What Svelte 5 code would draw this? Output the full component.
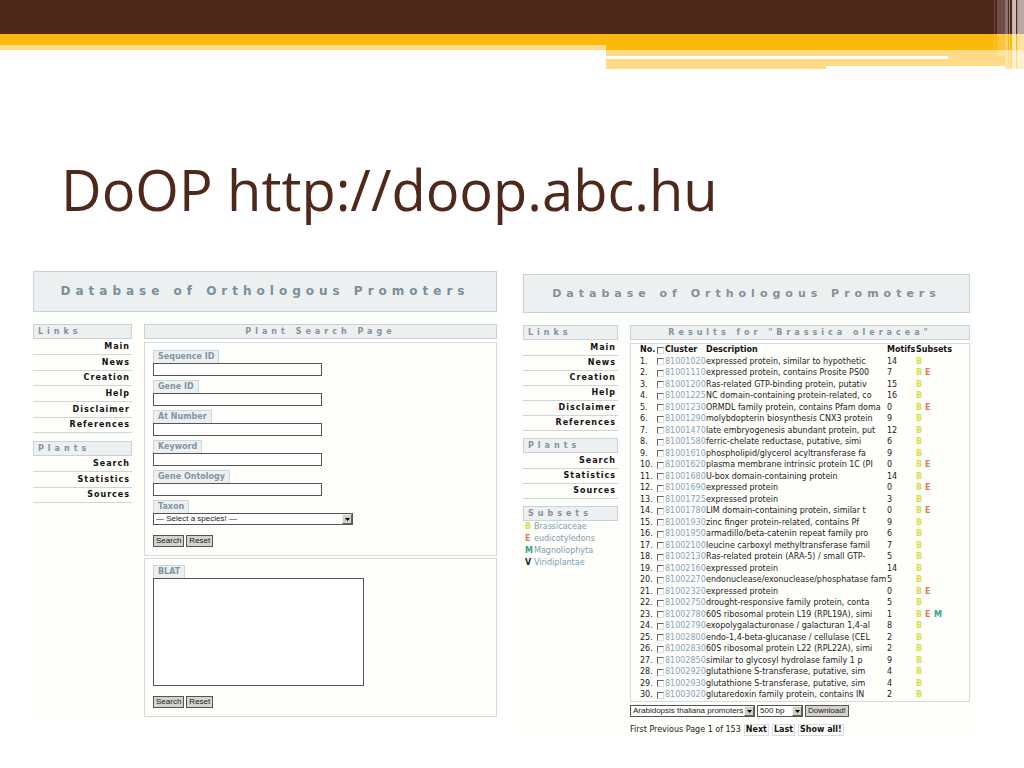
<script>
  const links = ['Main', 'News', 'Creation', 'Help', 'Disclaimer', 'References'];
  const plants = ['Search', 'Statistics', 'Sources'];
  const fields = ['Sequence ID', 'Gene ID', 'At Number', 'Keyword', 'Gene Ontology'];

  const subsets = [
    { code: 'B', name: 'Brassicaceae' },
    { code: 'E', name: 'eudicotyledons' },
    { code: 'M', name: 'Magnoliophyta' },
    { code: 'V', name: 'Viridiplantae' },
  ];

  // cluster, description, motifs, subsets
  const results = [
    ['81001020', 'expressed protein, similar to hypothetic', 14, 'B'],
    ['81001110', 'expressed protein, contains Prosite PS00', 7, 'BE'],
    ['81001200', 'Ras-related GTP-binding protein, putativ', 15, 'B'],
    ['81001225', 'NC domain-containing protein-related, co', 16, 'B'],
    ['81001230', 'ORMDL family protein, contains Pfam doma', 0, 'BE'],
    ['81001290', 'molybdopterin biosynthesis CNX3 protein', 9, 'B'],
    ['81001470', 'late embryogenesis abundant protein, put', 12, 'B'],
    ['81001580', 'ferric-chelate reductase, putative, simi', 6, 'B'],
    ['81001610', 'phospholipid/glycerol acyltransferase fa', 9, 'B'],
    ['81001620', 'plasma membrane intrinsic protein 1C (PI', 0, 'BE'],
    ['81001680', 'U-box domain-containing protein', 14, 'B'],
    ['81001690', 'expressed protein', 0, 'BE'],
    ['81001725', 'expressed protein', 3, 'B'],
    ['81001780', 'LIM domain-containing protein, similar t', 0, 'BE'],
    ['81001930', 'zinc finger protein-related, contains Pf', 9, 'B'],
    ['81001950', 'armadillo/beta-catenin repeat family pro', 6, 'B'],
    ['81002100', 'leucine carboxyl methyltransferase famil', 7, 'B'],
    ['81002130', 'Ras-related protein (ARA-5) / small GTP-', 5, 'B'],
    ['81002160', 'expressed protein', 14, 'B'],
    ['81002270', 'endonuclease/exonuclease/phosphatase fam', 5, 'B'],
    ['81002320', 'expressed protein', 0, 'BE'],
    ['81002750', 'drought-responsive family protein, conta', 5, 'B'],
    ['81002780', '60S ribosomal protein L19 (RPL19A), simi', 1, 'BEM'],
    ['81002790', 'exopolygalacturonase / galacturan 1,4-al', 8, 'B'],
    ['81002800', 'endo-1,4-beta-glucanase / cellulase (CEL', 2, 'B'],
    ['81002830', '60S ribosomal protein L22 (RPL22A), simi', 2, 'B'],
    ['81002850', 'similar to glycosyl hydrolase family 1 p', 9, 'B'],
    ['81002920', 'glutathione S-transferase, putative, sim', 4, 'B'],
    ['81002930', 'glutathione S-transferase, putative, sim', 4, 'B'],
    ['81003020', 'glutaredoxin family protein, contains IN', 2, 'B'],
  ];

  const slug = (text) => text.toLowerCase().replace(/ /g, '-');
</script>

{#snippet menu(title, items)}
  <h3 class="bar">{title}</h3>
  <ul class="menu">
    {#each items as item}
      <li><a href="#{slug(item)}">{item}</a></li>
    {/each}
  </ul>
{/snippet}

{#snippet arrow()}
  <span class="arrow">
    <svg viewBox="0 0 5 3" width="5" height="3"><path d="M0 0h5L2.5 3z" /></svg>
  </span>
{/snippet}

<svg class="band" viewBox="0 0 1024 70" preserveAspectRatio="none" aria-hidden="true">
  <rect width="1024" height="34" fill="#4f281c" />
  <rect y="34" width="1024" height="11" fill="#fdb90b" />
  <rect y="45" width="606" height="5" fill="#ffdc8a" />
  <rect x="606" y="45" width="418" height="5" fill="#fdb90b" />
  <rect x="606" y="50" width="418" height="6" fill="#ffdb88" />
  <rect x="948" y="56" width="76" height="3" fill="#ffdb88" />
  <rect x="606" y="59" width="418" height="7" fill="#ffdb88" />
  <rect x="606" y="66" width="220" height="3" fill="#ffdb88" />
  <rect x="1005" y="66" width="19" height="3" fill="#ffdb88" />
  <g fill="#fff">
    <rect x="994" width="1" height="50" opacity=".15" />
    <rect x="997" width="8" height="56" opacity=".18" />
    <rect x="1005" width="3" height="69" opacity=".35" />
    <rect x="1009" width="1" height="69" opacity=".4" />
    <rect x="1012" width="1" height="69" opacity=".6" />
    <rect x="1013" width="3" height="69" opacity=".7" />
    <rect x="1017" width="1" height="69" opacity=".5" />
    <rect x="1018" width="6" height="69" opacity=".6" />
  </g>
</svg>

<main>
  <h1>DoOP http://doop.abc.hu</h1>

  <div class="pages">
    <section class="page search">
      <h2>Database of Orthologous Promoters</h2>
      <div class="columns">
        <nav>
          {@render menu('Links', links)}
          {@render menu('Plants', plants)}
        </nav>
        <div class="content">
          <h3 class="bar center">Plant Search Page</h3>
          <form class="panel">
            {#each fields as field}
              <div class="field">
                <label for={slug(field)}>{field}</label>
                <input id={slug(field)} type="text" />
              </div>
            {/each}
            <div class="field">
              <label for="taxon">Taxon</label>
              <div class="select taxon">
                <select id="taxon"><option>— Select a species! —</option></select>
                {@render arrow()}
              </div>
            </div>
            <div class="buttons">
              <button type="button">Search</button>
              <button type="reset">Reset</button>
            </div>
          </form>
          <form class="panel">
            <div class="field">
              <label for="blat">BLAT</label>
              <textarea id="blat"></textarea>
            </div>
            <div class="buttons">
              <button type="button">Search</button>
              <button type="reset">Reset</button>
            </div>
          </form>
        </div>
      </div>
    </section>

    <section class="page results">
      <h2>Database of Orthologous Promoters</h2>
      <div class="columns">
        <nav>
          {@render menu('Links', links)}
          {@render menu('Plants', plants)}
          <h3 class="bar">Subsets</h3>
          <ul class="legend">
            {#each subsets as { code, name }}
              <li><b class={code}>{code}</b><a href="#{slug(name)}">{name}</a></li>
            {/each}
          </ul>
        </nav>
        <div class="content">
          <h3 class="bar center">Results for "Brassica oleracea"</h3>
          <div class="panel">
            <table>
              <colgroup>
                <col class="no" /><col class="check" /><col class="cluster" />
                <col /><col class="motifs" /><col class="subsets" />
              </colgroup>
              <thead>
                <tr>
                  <th>No.</th>
                  <th><input type="checkbox" aria-label="Select all" /></th>
                  <th>Cluster</th>
                  <th>Description</th>
                  <th>Motifs</th>
                  <th>Subsets</th>
                </tr>
              </thead>
              <tbody>
                {#each results as [cluster, description, motifs, codes], i}
                  <tr>
                    <td>{i + 1}.</td>
                    <td><input type="checkbox" aria-label={cluster} /></td>
                    <td><a href="#{cluster}">{cluster}</a></td>
                    <td>{description}</td>
                    <td>{motifs}</td>
                    <td class="codes">
                      {#each codes as code}<b class={code}>{code}</b>{/each}
                    </td>
                  </tr>
                {/each}
              </tbody>
            </table>
          </div>
          <div class="download">
            <div class="select species">
              <select aria-label="Promoters"><option>Arabidopsis thaliana promoters</option></select>
              {@render arrow()}
            </div>
            <div class="select length">
              <select aria-label="Length"><option>500 bp</option></select>
              {@render arrow()}
            </div>
            <button type="button">Download!</button>
          </div>
          <div class="pager">
            <span>First Previous Page 1 of 153</span>
            <a href="#next">Next</a>
            <a href="#last">Last</a>
            <a href="#all">Show all!</a>
          </div>
        </div>
      </div>
    </section>
  </div>
</main>

<style>
  :global(body) {
    margin: 0;
    background: #fff;
  }

  .band {
    display: block;
    width: 100%;
    height: 70px;
  }

  main {
    padding: 84px 54px 30px 33px;
    font: 8px/12px 'DejaVu Sans', Verdana, sans-serif;
    color: #222;
  }

  h1 {
    margin: 0 0 47px 28px;
    font: 56px/70px 'Open Sans', 'Trebuchet MS', sans-serif;
    color: #4f281c;
  }

  h2,
  h3,
  ul {
    margin: 0;
    padding: 0;
    list-style: none;
  }

  a {
    color: inherit;
    text-decoration: none;
  }

  .pages {
    display: grid;
    grid-template-columns: 464fr 447fr;
    align-items: start;
    gap: 26px;
  }

  .page {
    background: #fefefb;
    box-shadow: 0 0 0 3px #fefefb;
  }

  .results {
    margin-top: 3px;
  }

  h2 {
    box-sizing: border-box;
    margin-bottom: 12px;
    border: 1px solid #c9d2d8;
    background: #edf0f0;
    font-size: 12px;
    line-height: 39px;
    letter-spacing: 5px;
    text-align: center;
    white-space: nowrap;
    color: #7b8f9b;
  }

  .results h2 {
    font-size: 11px;
    line-height: 37px;
    color: #83909a;
  }

  .columns {
    display: grid;
    grid-template-columns: 99fr 353fr;
    gap: 12px;
  }

  .results .columns {
    grid-template-columns: 95fr 340fr;
  }

  .columns > * {
    min-width: 0;
  }

  .bar {
    border: 1px solid #c9d2d8;
    background: #edf0f0;
    padding: 0 4px;
    font-size: 8px;
    line-height: 13px;
    letter-spacing: 4px;
    white-space: nowrap;
    color: #87939b;
  }

  .center {
    text-align: center;
  }

  .menu {
    margin-bottom: 8px;
    font-weight: bold;
    letter-spacing: 1px;
    text-align: right;
    color: #111;
  }

  .menu li {
    padding-right: 2px;
    border-bottom: 1px solid #d0d5d8;
    line-height: 15px;
  }

  .menu li:nth-child(3n) {
    line-height: 14px;
  }

  .results .menu {
    margin-bottom: 7px;
  }

  .results .menu li + li {
    line-height: 14px;
  }

  .panel {
    margin-top: 3px;
    padding: 7px 8px 8px;
    border: 1px solid #d3dbe0;
  }

  .panel + .panel {
    margin-top: 2px;
    padding-top: 6px;
  }

  .field {
    display: flex;
    flex-direction: column;
    align-items: flex-start;
    margin-bottom: 4px;
  }

  label {
    padding: 0 4px;
    border: 1px solid #ccd5dc;
    border-bottom: 0;
    background: #edf0f2;
    font-weight: bold;
    color: #8295a1;
  }

  input[type='text'],
  textarea,
  select,
  button {
    box-sizing: border-box;
    margin: 0;
    border: 1px solid #555;
    border-radius: 0;
    background: #fff;
    font: 8px/10px 'Liberation Sans', Arial, sans-serif;
    color: #222;
  }

  input[type='text'] {
    width: 169px;
    max-width: 100%;
    height: 13px;
    padding: 0 2px;
  }

  textarea {
    width: 211px;
    max-width: 100%;
    height: 108px;
    resize: none;
  }

  .select {
    position: relative;
    height: 12px;
  }

  select {
    display: block;
    width: 100%;
    height: 12px;
    padding: 0 2px;
    appearance: none;
  }

  .taxon {
    width: 200px;
  }

  .species {
    width: 125px;
  }

  .length {
    width: 46px;
  }

  .arrow {
    position: absolute;
    top: 1px;
    right: 1px;
    display: flex;
    align-items: center;
    justify-content: center;
    box-sizing: border-box;
    width: 10px;
    height: 10px;
    border: 1px solid;
    border-color: #eee #666 #666 #eee;
    background: #d4d0c8;
    pointer-events: none;
  }

  button {
    height: 12px;
    padding: 0 2px;
    background: #d6d3ce;
    white-space: nowrap;
  }

  .buttons {
    display: flex;
    gap: 2px;
    margin-top: 10px;
  }

  .legend {
    margin-left: 2px;
    color: #7a9db5;
  }

  .legend li {
    display: flex;
    line-height: 12px;
  }

  .legend b {
    width: 9px;
  }

  .B {
    color: #d9e04a;
  }

  .E {
    color: #dd7a5a;
  }

  .M {
    color: #2fa882;
  }

  .V {
    color: #223;
  }

  .results .panel {
    padding: 0 0 0 9px;
  }

  table {
    width: 100%;
    table-layout: fixed;
    border-collapse: collapse;
  }

  .no {
    width: 17px;
  }

  .check {
    width: 8px;
  }

  .cluster {
    width: 41px;
  }

  .motifs {
    width: 29px;
  }

  .subsets {
    width: 53px;
  }

  th,
  td {
    padding: 0;
    line-height: 12px;
    text-align: left;
    white-space: nowrap;
  }

  th {
    color: #111;
  }

  tbody tr:nth-child(odd) td {
    line-height: 11px;
  }

  td a {
    color: #86a3b8;
  }

  .codes b {
    display: inline-block;
    width: 9px;
  }

  input[type='checkbox'] {
    display: block;
    box-sizing: border-box;
    width: 7px;
    height: 7px;
    margin: 0;
    border: 1px solid;
    border-color: #666 #ddd #ddd #666;
    background: #fff;
    appearance: none;
  }

  .download {
    display: flex;
    gap: 2px;
    margin-top: 3px;
  }

  .pager {
    display: flex;
    align-items: center;
    gap: 3px;
    margin-top: 7px;
    white-space: nowrap;
  }

  .pager a {
    padding: 0 1px;
    border: 1px solid #d5dde3;
    line-height: 10px;
    font-weight: bold;
    color: #111;
  }
</style>
